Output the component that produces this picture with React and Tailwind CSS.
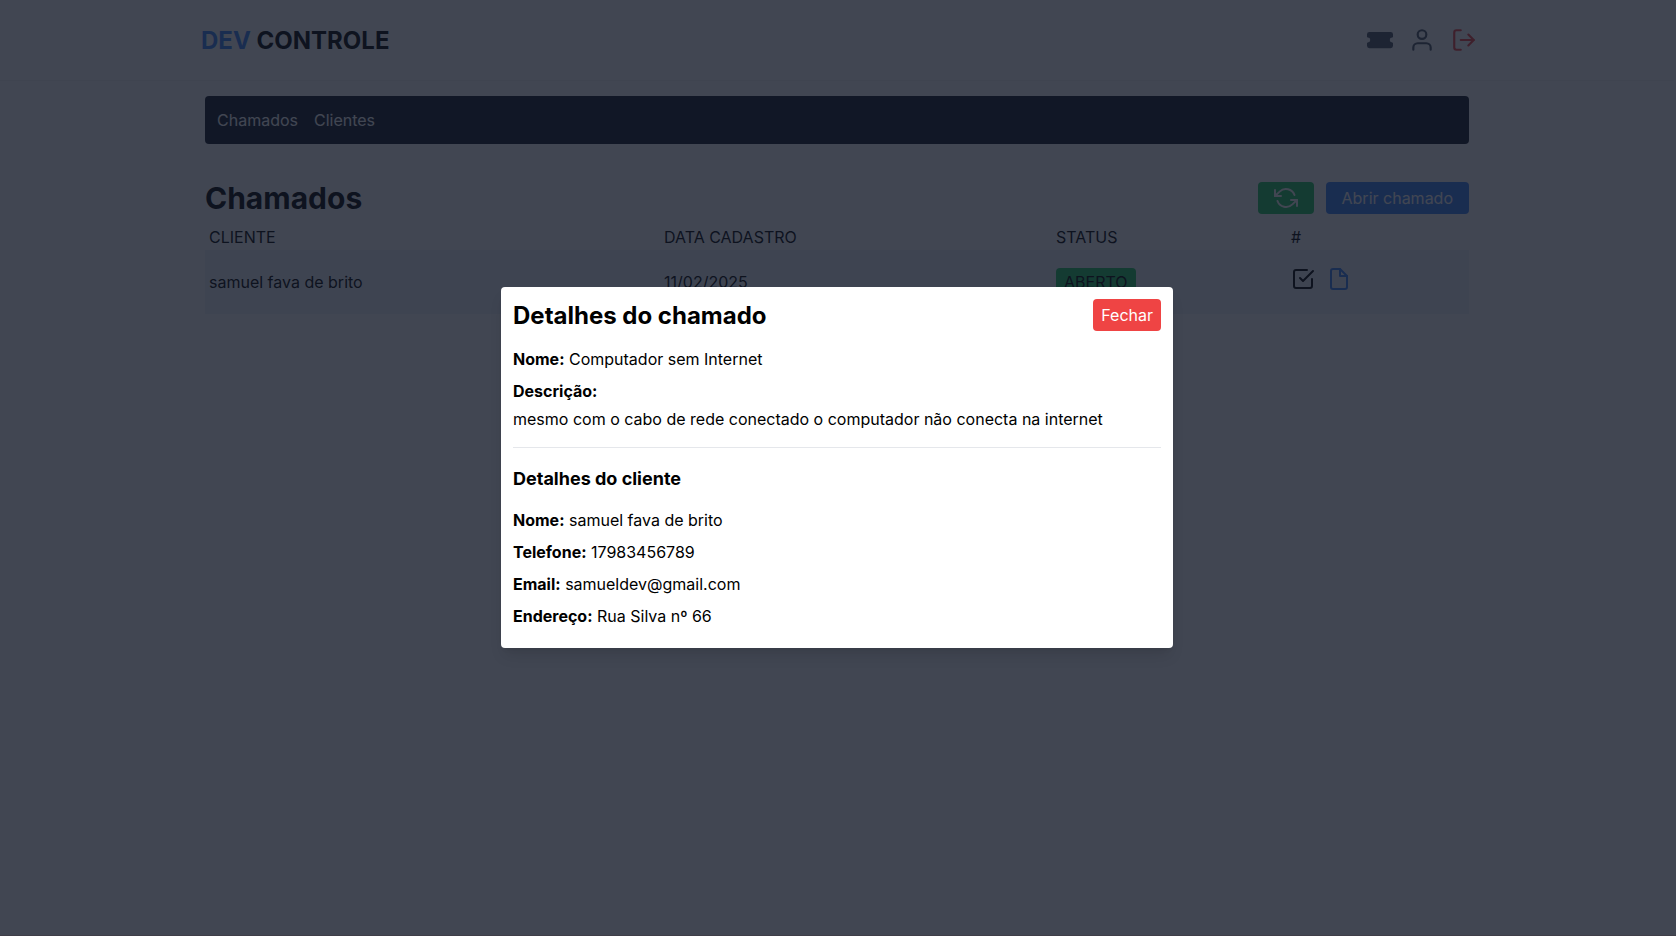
import { FiUser, FiLogOut, FiCheckSquare, FiFile, FiRefreshCcw } from "react-icons/fi";
import { BsTicketFill } from "react-icons/bs";

function Field({ label, children }) {
  return (
    <p className="mb-2">
      <span className="font-bold">{label}:</span> {children}
    </p>
  );
}

function Modal() {
  return (
    <div className="absolute inset-0 flex items-center justify-center bg-[#111827cc] pr-0.5">
      <div className="w-[672px] rounded bg-white p-3 shadow-lg">
        <div className="mb-4 flex h-8 items-center justify-between">
          <h1 className="pt-0.5 text-2xl font-bold">Detalhes do chamado</h1>
          <button className="rounded bg-[#ef4444] px-2 py-1 text-white">Fechar</button>
        </div>
        <Field label="Nome">Computador sem Internet</Field>
        <h2 className="mb-1 font-bold">Descrição:</h2>
        <p>mesmo com o cabo de rede conectado o computador não conecta na internet</p>
        <div className="my-4 border-b border-[#e5e7eb]" />
        <h1 className="mb-[15px] pt-px text-lg font-bold">Detalhes do cliente</h1>
        <Field label="Nome">samuel fava de brito</Field>
        <Field label="Telefone">17983456789</Field>
        <Field label="Email">samueldev@gmail.com</Field>
        <Field label="Endereço">Rua Silva nº 66</Field>
      </div>
    </div>
  );
}

export default function App() {
  return (
    <div className="relative h-[936px] overflow-hidden border-b border-[#3f3e48] bg-white pr-0.5 font-['Inter',sans-serif] text-black">
      <header className="border-b border-[#f3f4f6]">
        <div className="mx-auto flex h-20 w-[1280px] items-center justify-between">
          <h1 className="pl-1 pt-0.5 text-2xl font-bold">
            <span className="text-[#3b82f6]">DEV</span> CONTROLE
          </h1>
          <div className="flex items-center gap-4">
            <BsTicketFill size={26} color="#4b5563" />
            <FiUser size={26} color="#4b5563" />
            <FiLogOut size={26} color="#ef4444" />
          </div>
        </div>
      </header>
      <main className="mx-auto w-[1280px] px-2 pt-[15px]">
        <nav className="flex h-12 items-center gap-4 rounded bg-[#111827] px-3 text-white">
          <a>Chamados</a>
          <a>Clientes</a>
        </nav>
        <div className="mt-9 flex h-9 items-center justify-between">
          <h1 className="text-3xl font-bold">Chamados</h1>
          <div className="flex gap-3">
            <button className="rounded bg-[#22c55e] px-4 py-1 text-white">
              <FiRefreshCcw size={24} />
            </button>
            <button className="rounded bg-[#3b82f6] px-4 py-1 text-white">Abrir chamado</button>
          </div>
        </div>
        <table className="mt-2 w-full table-fixed">
          <thead>
            <tr className="h-[26px] text-left">
              <th className="w-[455px] px-1 font-normal">CLIENTE</th>
              <th className="w-[392px] px-1 font-normal">DATA CADASTRO</th>
              <th className="w-[235px] px-1 font-normal">STATUS</th>
              <th className="px-1 font-normal">#</th>
            </tr>
          </thead>
          <tbody>
            <tr className="h-16 bg-[#f1f5f9]">
              <td className="px-1">samuel fava de brito</td>
              <td className="px-1">11/02/2025</td>
              <td className="px-1">
                <span className="rounded bg-[#22c55e] px-2 py-1">ABERTO</span>
              </td>
              <td className="px-1">
                <div className="flex gap-3 pb-1.5">
                  <FiCheckSquare size={24} />
                  <FiFile size={24} color="#3b82f6" />
                </div>
              </td>
            </tr>
          </tbody>
        </table>
      </main>
      <Modal />
    </div>
  );
}
